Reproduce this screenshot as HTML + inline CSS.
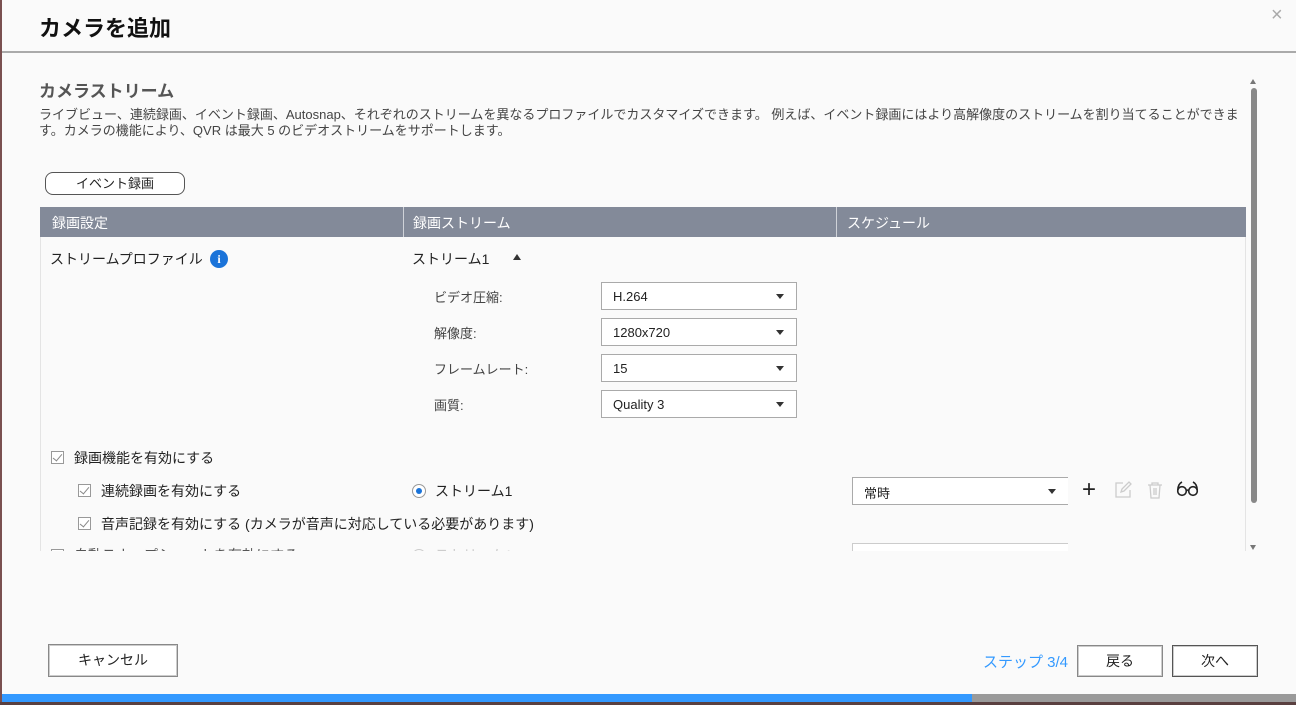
<!DOCTYPE html>
<html><head><meta charset="utf-8"><style>
*{margin:0;padding:0;box-sizing:border-box}
body{width:1296px;height:705px;background:#fafafa;font-family:"Liberation Sans","Noto Sans CJK JP",sans-serif;color:#222;position:relative;overflow:hidden}
.a{position:absolute;white-space:nowrap}
.sel{position:absolute;background:#fff;border:1px solid #aaa;height:28px;font-size:13px;padding:6px 0 0 11px}
.sel:after{content:"";position:absolute;right:12px;top:11px;border-left:4.5px solid transparent;border-right:4.5px solid transparent;border-top:5px solid #333}
.cb{position:absolute;width:13px;height:13px;border:1px solid #999;background:#fff}
.cb:after{content:"";position:absolute;left:3px;top:0px;width:4px;height:8px;border-right:1.5px solid #888;border-bottom:1.5px solid #888;transform:rotate(40deg)}
.btn{position:absolute;border:1px solid #888;background:#fff;font-size:14px;text-align:center;box-shadow:0 0 0 1px #ccc inset}
</style></head><body>
<div class="a" style="left:0;top:0;width:2px;height:705px;background:#7a5050"></div>
<div class="a" style="left:39px;top:11px;font-size:22px;font-weight:bold;color:#111">カメラを追加</div>
<div class="a" style="left:1271px;top:4px;font-size:20px;color:#aaa">×</div>
<div class="a" style="left:2px;top:51px;width:1294px;height:2px;background:#aaa"></div>
<div style="position:absolute;left:2px;top:53px;width:1294px;height:498px;overflow:hidden">
<div class="a" style="left:37px;top:24px;font-size:17px;font-weight:bold;color:#555">カメラストリーム</div>
<div class="a" style="left:37px;top:54px;font-size:13px;color:#444;line-height:16px">ライブビュー、連続録画、イベント録画、Autosnap、それぞれのストリームを異なるプロファイルでカスタマイズできます。 例えば、イベント録画にはより高解像度のストリームを割り当てることができま<br>す。カメラの機能により、QVR は最大 5 のビデオストリームをサポートします。</div>
<div class="a" style="left:43px;top:119px;width:140px;height:23px;border:1px solid #555;border-radius:8px;background:#fff;font-size:13px;text-align:center;line-height:21px">イベント録画</div>
<div class="a" style="left:38px;top:154px;width:1206px;height:30px;background:#838a99;color:#fff;font-size:14px"></div>
<div class="a" style="left:401px;top:154px;width:1px;height:30px;background:#cfd2d8"></div>
<div class="a" style="left:834px;top:154px;width:1px;height:30px;background:#cfd2d8"></div>
<div class="a" style="left:50px;top:160px;font-size:14px;color:#fff">録画設定</div>
<div class="a" style="left:411px;top:160px;font-size:14px;color:#fff">録画ストリーム</div>
<div class="a" style="left:845px;top:160px;font-size:14px;color:#fff">スケジュール</div>
<div class="a" style="left:38px;top:184px;width:1px;height:320px;background:#e4e4e4"></div>
<div class="a" style="left:1243px;top:184px;width:1px;height:320px;background:#e4e4e4"></div>
<div class="a" style="left:48px;top:196px;font-size:14px">ストリームプロファイル</div>
<div class="a" style="left:208px;top:197px;width:18px;height:18px;border-radius:50%;background:#1a73d9;color:#fff;font-size:12px;font-weight:bold;text-align:center;line-height:18px;font-family:'Liberation Serif',serif">i</div>
<div class="a" style="left:410px;top:196px;font-size:14px">ストリーム1</div>
<div class="a" style="left:511px;top:201px;border-left:4.5px solid transparent;border-right:4.5px solid transparent;border-bottom:6px solid #333"></div>
<div class="a" style="left:432px;top:234px;font-size:13px;color:#444">ビデオ圧縮:</div>
<div class="a" style="left:432px;top:270px;font-size:13px;color:#444">解像度:</div>
<div class="a" style="left:432px;top:306px;font-size:13px;color:#444">フレームレート:</div>
<div class="a" style="left:432px;top:342px;font-size:13px;color:#444">画質:</div>
<div class="sel" style="left:599px;top:229px;width:196px">H.264</div>
<div class="sel" style="left:599px;top:265px;width:196px">1280x720</div>
<div class="sel" style="left:599px;top:301px;width:196px">15</div>
<div class="sel" style="left:599px;top:337px;width:196px">Quality 3</div>
<div class="cb" style="left:49px;top:398px"></div>
<div class="a" style="left:72px;top:395px;font-size:14px">録画機能を有効にする</div>
<div class="cb" style="left:76px;top:431px"></div>
<div class="a" style="left:99px;top:428px;font-size:14px">連続録画を有効にする</div>
<div class="a" style="left:410px;top:431px;width:14px;height:14px;border-radius:50%;border:1px solid #999;background:#fff"><div style="margin:3px;width:6px;height:6px;border-radius:50%;background:#1a73d9"></div></div>
<div class="a" style="left:433px;top:428px;font-size:14px">ストリーム1</div>
<div class="sel" style="left:850px;top:424px;width:216px;border-right:none;padding-top:5px">常時</div>
<div class="a" style="left:1080px;top:423px;font-size:24px;color:#222;font-weight:300">+</div>
<svg class="a" style="left:1112px;top:428px" width="18" height="18"><path d="M9 2H2V16H16V9M7 11L8 8L15 1L17 3L10 10Z" fill="none" stroke="#ccc" stroke-width="1.3"/></svg>
<svg class="a" style="left:1144px;top:428px" width="18" height="18"><path d="M2 4H16M6 4V2H12V4M4 4L5 17H13L14 4M8 7V14M10 7V14" fill="none" stroke="#ccc" stroke-width="1.3"/></svg>
<svg class="a" style="left:1174px;top:427px" width="24" height="18"><circle cx="6" cy="11" r="4.3" fill="none" stroke="#222" stroke-width="1.6"/><circle cx="17" cy="11" r="4.3" fill="none" stroke="#222" stroke-width="1.6"/><path d="M10.3 11Q11.5 9 12.7 11M1.8 10Q2 4 6 2M21.2 10Q21 4 17 2" fill="none" stroke="#222" stroke-width="1.6"/></svg>
<div class="cb" style="left:76px;top:464px"></div>
<div class="a" style="left:99px;top:461px;font-size:14px">音声記録を有効にする (カメラが音声に対応している必要があります)</div>
<div class="cb" style="left:49px;top:496px"></div>
<div class="a" style="left:72px;top:492px;font-size:14px;color:#555">自動スナップショットを有効にする</div>
<div class="a" style="left:410px;top:496px;width:14px;height:14px;border-radius:50%;border:1px solid #ccc"></div>
<div class="a" style="left:433px;top:492px;font-size:14px;color:#ccc">ストリーム1</div>
<div class="sel" style="left:850px;top:490px;width:216px;border-color:#ccc;border-right:none;color:#bbb">常時</div>
<div class="a" style="left:1249px;top:35px;width:6px;height:415px;border-radius:3px;background:#888"></div>
<div class="a" style="left:1248px;top:26px;border-left:3.5px solid transparent;border-right:3.5px solid transparent;border-bottom:5px solid #777"></div>
<div class="a" style="left:1248px;top:492px;border-left:3.5px solid transparent;border-right:3.5px solid transparent;border-top:5px solid #777"></div>
</div>
<div class="btn" style="left:48px;top:644px;width:130px;height:33px;line-height:31px">キャンセル</div>
<div class="a" style="left:983px;top:651px;font-size:15px;color:#3399ff">ステップ 3/4</div>
<div class="btn" style="left:1077px;top:645px;width:86px;height:32px;line-height:30px">戻る</div>
<div class="btn" style="left:1172px;top:645px;width:86px;height:32px;line-height:30px;border-color:#555">次へ</div>
<div class="a" style="left:2px;top:694px;width:970px;height:8px;background:#3399ff"></div>
<div class="a" style="left:972px;top:694px;width:324px;height:8px;background:#9a9a9a"></div>
<div class="a" style="left:0;top:702px;width:1296px;height:3px;background:#5a4040"></div>
</body></html>
